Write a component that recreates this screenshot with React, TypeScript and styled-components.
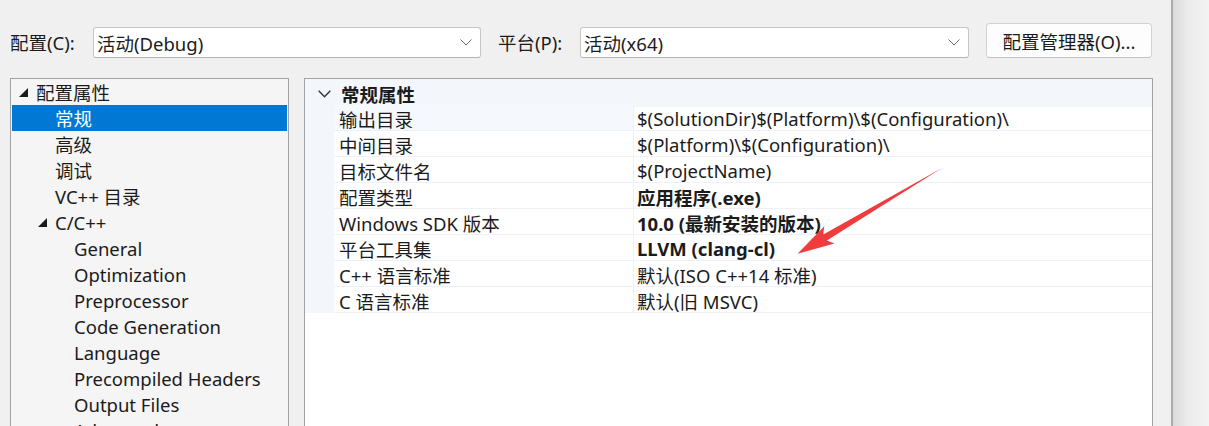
import React from "react";
import styled, { createGlobalStyle } from "styled-components";

const Global = createGlobalStyle`
  html, body { margin: 0; padding: 0; }
  body {
    background: #f0f0f0;
    font-family: "Noto Sans", "Noto Sans CJK SC", sans-serif;
    font-size: 18.5px;
    color: #1b1b1b;
    overflow: hidden;
  }
`;

const Page = styled.div`
  position: relative;
  display: flex;
  width: 1209px;
  height: 426px;
  overflow: hidden;
`;

const Dialog = styled.div`
  flex: 1;
  display: flex;
  flex-direction: column;
  padding: 23px 18px 0 10px;
  background: #f0f0f0;
`;

const Edge = styled.div`
  width: 36px;
  border-left: 2px solid #acacac;
  background: linear-gradient(to right, #dadada, #ebebeb 40%, #f3f3f3);
`;

const TopBar = styled.div`
  display: flex;
  align-items: flex-end;
  height: 35px;
`;

const Label = styled.div<{ $w: number }>`
  width: ${(p) => p.$w}px;
  height: 31px;
  line-height: 31px;
  white-space: nowrap;
`;

const Select = styled.div<{ $w: number; $mr: number }>`
  box-sizing: border-box;
  width: ${(p) => p.$w}px;
  margin-right: ${(p) => p.$mr}px;
  height: 31px;
  display: flex;
  align-items: center;
  justify-content: space-between;
  padding: 0 8px 0 3px;
  background: #ffffff;
  border: 1px solid #c6c6c6;
  border-bottom-color: #b4b4b4;
  border-radius: 3px;
`;

const Button = styled.div`
  box-sizing: border-box;
  width: 166px;
  height: 35px;
  display: flex;
  align-items: center;
  justify-content: center;
  background: #fdfdfd;
  border: 1px solid #d2d2d2;
  border-bottom-color: #c0c0c0;
  border-radius: 4px;
`;

const Panels = styled.div`
  display: flex;
  gap: 15px;
  margin-top: 20px;
  flex: 1;
`;

const Tree = styled.div`
  box-sizing: border-box;
  width: 279px;
  height: 380px;
  padding: 0 1px;
  background: #f5f5f5;
  border: 1px solid #a2a2a2;
  display: flex;
  flex-direction: column;
`;

const TreeRow = styled.div<{ $indent: number; $selected?: boolean }>`
  height: 26px;
  flex: none;
  display: flex;
  align-items: center;
  padding-left: ${(p) => p.$indent}px;
  white-space: nowrap;
  background: ${(p) => (p.$selected ? "#0078d4" : "transparent")};
  color: ${(p) => (p.$selected ? "#ffffff" : "#1b1b1b")};
`;

const Twisty = styled.span`
  width: 17px;
  display: inline-flex;
  align-items: center;
  margin-left: -17px;
`;

const Grid = styled.div`
  box-sizing: border-box;
  flex: 1;
  height: 380px;
  background: #ffffff;
  border: 1px solid #a2a2a2;
  display: grid;
  grid-template-columns: 29px 299px 1fr;
  grid-auto-rows: 26px;
  align-content: start;
`;

const Header = styled.div`
  grid-column: 1 / -1;
  height: 28px;
  box-sizing: border-box;
  padding-top: 2px;
  display: flex;
  align-items: center;
  background: #f3f6fb;
  font-weight: 700;
`;

const Chevron = styled.span`
  width: 36px;
  display: inline-flex;
  justify-content: center;
  padding-left: 2px;
  box-sizing: border-box;
`;

const Gutter = styled.div`
  background: #f3f6fb;
`;

const NameCell = styled.div<{ $hl?: boolean }>`
  display: flex;
  align-items: center;
  padding: 2px 0 0 5px;
  white-space: nowrap;
  background: ${(p) => (p.$hl ? "#f5f8fc" : "#ffffff")};
  border-bottom: 1px solid #eef1f6;
`;

const ValueCell = styled.div<{ $bold?: boolean }>`
  display: flex;
  align-items: center;
  padding: 2px 0 0 3px;
  white-space: nowrap;
  font-weight: ${(p) => (p.$bold ? 700 : 400)};
  border-left: 1px solid #eef1f6;
  border-bottom: 1px solid #eef1f6;
`;

const Overlay = styled.svg`
  position: absolute;
  left: 0;
  top: 0;
  pointer-events: none;
`;

const Down = () => (
  <svg width="12" height="7" viewBox="0 0 12 7">
    <polyline points="0.5,0.5 6,6 11.5,0.5" fill="none" stroke="#6a6a6a" strokeWidth="1" />
  </svg>
);

const Tri = ({ color }: { color: string }) => (
  <svg width="9" height="9" viewBox="0 0 9 9">
    <polygon points="9,0 9,9 0,9" fill={color} />
  </svg>
);

type TreeItem = { text: string; indent: number; expander?: boolean; selected?: boolean };
const treeItems: TreeItem[] = [
  { text: "配置属性", indent: 24, expander: true },
  { text: "常规", indent: 43, selected: true },
  { text: "高级", indent: 43 },
  { text: "调试", indent: 43 },
  { text: "VC++ 目录", indent: 43 },
  { text: "C/C++", indent: 43, expander: true },
  { text: "General", indent: 62 },
  { text: "Optimization", indent: 62 },
  { text: "Preprocessor", indent: 62 },
  { text: "Code Generation", indent: 62 },
  { text: "Language", indent: 62 },
  { text: "Precompiled Headers", indent: 62 },
  { text: "Output Files", indent: 62 },
  { text: "Advanced", indent: 62 },
];

type Prop = { name: string; value: string; bold?: boolean };
const props: Prop[] = [
  { name: "输出目录", value: "$(SolutionDir)$(Platform)\\$(Configuration)\\" },
  { name: "中间目录", value: "$(Platform)\\$(Configuration)\\" },
  { name: "目标文件名", value: "$(ProjectName)" },
  { name: "配置类型", value: "应用程序(.exe)", bold: true },
  { name: "Windows SDK 版本", value: "10.0 (最新安装的版本)", bold: true },
  { name: "平台工具集", value: "LLVM (clang-cl)", bold: true },
  { name: "C++ 语言标准", value: "默认(ISO C++14 标准)" },
  { name: "C 语言标准", value: "默认(旧 MSVC)" },
];

export default function App() {
  return (
    <>
      <Global />
      <Page>
        <Dialog>
          <TopBar>
            <Label $w={83}>配置(C):</Label>
            <Select $w={388} $mr={17}>
              <span>活动(Debug)</span>
              <Down />
            </Select>
            <Label $w={82}>平台(P):</Label>
            <Select $w={389} $mr={17}>
              <span>活动(x64)</span>
              <Down />
            </Select>
            <Button>配置管理器(O)...</Button>
          </TopBar>
          <Panels>
            <Tree>
              {treeItems.map((it) => (
                <TreeRow key={it.text} $indent={it.indent} $selected={it.selected}>
                  {it.expander && (
                    <Twisty>
                      <Tri color="#1b1b1b" />
                    </Twisty>
                  )}
                  {it.text}
                </TreeRow>
              ))}
            </Tree>
            <Grid>
              <Header>
                <Chevron>
                  <svg width="13" height="8" viewBox="0 0 13 8">
                    <polyline points="0.7,0.7 6.5,6.7 12.3,0.7" fill="none" stroke="#333" strokeWidth="1.4" />
                  </svg>
                </Chevron>
                常规属性
              </Header>
              {props.map((p, i) => (
                <React.Fragment key={p.name}>
                  <Gutter />
                  <NameCell $hl={i === 0}>{p.name}</NameCell>
                  <ValueCell $bold={p.bold}>{p.value}</ValueCell>
                </React.Fragment>
              ))}
            </Grid>
          </Panels>
        </Dialog>
        <Edge />
        <Overlay width="1209" height="426" viewBox="0 0 1209 426">
          <polygon
            transform="translate(942,168) rotate(149.3)"
            points="0,0 136,-3.5 131,-10 168,0 131,10 136,3.5"
            fill="#f03c3c"
          />
        </Overlay>
      </Page>
    </>
  );
}
